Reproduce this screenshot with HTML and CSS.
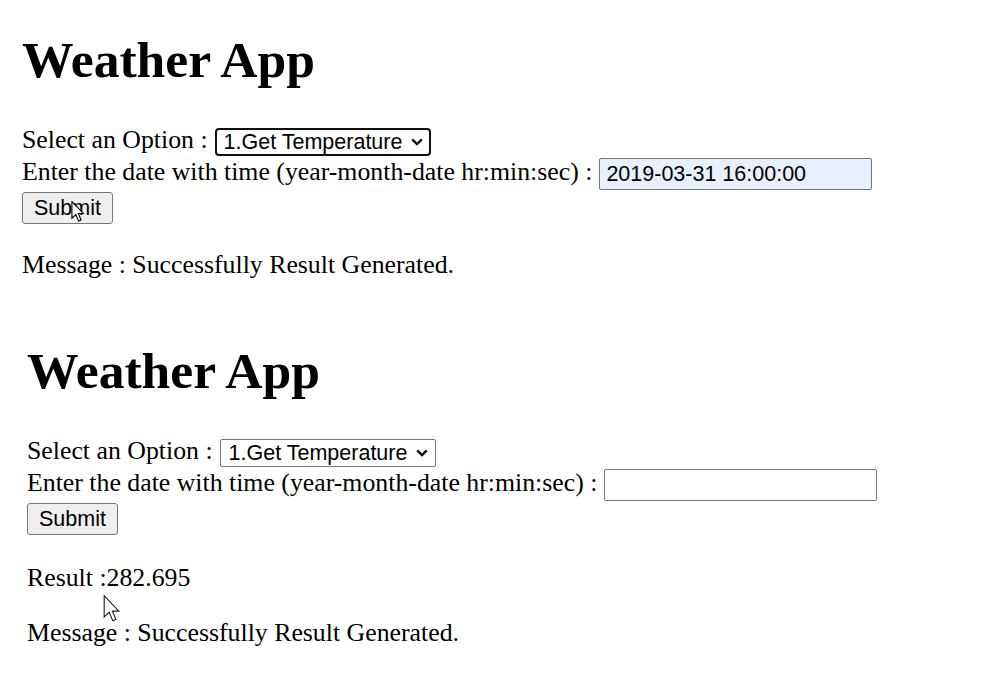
FILE: index.html
```html
<!DOCTYPE html>
<html lang="en">
<head>
<meta charset="utf-8">
<title>Weather App</title>
<link rel="stylesheet" href="styles.css">
</head>
<body>
<section class="shot shot-one">
  <h1 class="title">Weather App</h1>
  <form class="form">
    <div class="row">
      <span class="label">Select an Option :</span>
      <span class="select-wrap">
        <select class="select select-focus"><option>1.Get Temperature</option></select>
        <svg class="chev" width="12" height="8" viewBox="0 0 12 8"><path d="M1.2 1.3 L6 6 L10.8 1.3" fill="none" stroke="#111" stroke-width="2.4"/></svg>
      </span>
    </div>
    <div class="row">
      <span class="label">Enter the date with time (year-month-date hr:min:sec) :</span>
      <input class="text text-filled" type="text" value="2019-03-31 16:00:00">
    </div>
    <div class="row">
      <button class="btn" type="button">Submit</button>
    </div>
  </form>
  <p class="msg first">Message : Successfully Result Generated.</p>
  <svg class="cursor cursor-a" width="14" height="21" viewBox="0 0 12 19"><path d="M0.5 0.5 L0.5 15.5 L4 12.2 L6.6 18.2 L8.8 17.2 L6.3 11.3 L10.8 11.3 Z" fill="#fff" stroke="#000" stroke-width="1"/></svg>
</section>
<section class="shot shot-two">
  <h1 class="title">Weather App</h1>
  <form class="form">
    <div class="row">
      <span class="label">Select an Option :</span>
      <span class="select-wrap">
        <select class="select"><option>1.Get Temperature</option></select>
        <svg class="chev" width="12" height="8" viewBox="0 0 12 8"><path d="M1.2 1.3 L6 6 L10.8 1.3" fill="none" stroke="#111" stroke-width="2.4"/></svg>
      </span>
    </div>
    <div class="row">
      <span class="label">Enter the date with time (year-month-date hr:min:sec) :</span>
      <input class="text" type="text" value="">
    </div>
    <div class="row">
      <button class="btn" type="button">Submit</button>
    </div>
  </form>
  <p class="msg result">Result :282.695</p>
  <p class="msg after">Message : Successfully Result Generated.</p>
  <svg class="cursor cursor-b" width="18" height="27" viewBox="0 0 12 19"><path d="M0.5 0.5 L0.5 15.5 L4 12.2 L6.6 18.2 L8.8 17.2 L6.3 11.3 L10.8 11.3 Z" fill="#fff" stroke="#222" stroke-width="0.8"/></svg>
</section>
</body>
</html>
```
FILE: styles.css
```css
html, body {
  margin: 0;
  padding: 0;
  background: #fff;
}
body {
  font-family: "Liberation Serif", "Times New Roman", serif;
  font-size: 25.8px;
  color: #000;
  width: 981px;
  height: 687px;
  overflow: hidden;
}
.shot {
  position: relative;
  box-sizing: border-box;
  padding-top: 30px;
}
.shot-one {
  height: 311px;
  padding-left: 22px;
}
.shot-two {
  padding-left: 27px;
}
.title {
  font-size: 51.6px;
  line-height: 60px;
  font-weight: bold;
  margin: 0 0 38px 0;
}
.form {
  display: flex;
  flex-direction: column;
  gap: 2px;
}
.row {
  display: flex;
  align-items: center;
  gap: 7px;
}
.label {
  line-height: 24px;
  padding-bottom: 4px;
  white-space: nowrap;
}
.select-wrap {
  position: relative;
  display: inline-flex;
}
.select {
  appearance: none;
  -webkit-appearance: none;
  box-sizing: border-box;
  width: 216px;
  height: 28px;
  margin: 0;
  padding: 0 0 0 8px;
  font-family: "Liberation Sans", Arial, sans-serif;
  font-size: 21.5px;
  color: #000;
  background: #fff;
  border: 1px solid #767676;
  border-radius: 2px;
}
.select-focus {
  border: 2px solid #101010;
  border-radius: 4px;
  padding-left: 7px;
}
.chev {
  position: absolute;
  right: 8px;
  top: 10px;
  pointer-events: none;
}
.text {
  box-sizing: border-box;
  width: 273px;
  height: 32px;
  margin: 0;
  padding: 0 6px;
  font-family: "Liberation Sans", Arial, sans-serif;
  font-size: 21.5px;
  color: #000;
  background: #fff;
  border: 1px solid #767676;
  border-radius: 2px;
}
.text-filled {
  background: #e8f0fe;
}
.btn {
  box-sizing: border-box;
  width: 91px;
  height: 32px;
  margin: 0;
  padding: 0;
  font-family: "Liberation Sans", Arial, sans-serif;
  font-size: 21.5px;
  color: #000;
  background: #efefef;
  border: 1px solid #767676;
  border-radius: 3px;
}
.msg {
  line-height: 30px;
  margin: 0;
}
.first {
  margin-top: 26px;
}
.result {
  margin-top: 28px;
}
.after {
  margin-top: 25px;
}
.cursor {
  position: absolute;
}
.cursor-a {
  left: 71px;
  top: 201px;
}
.cursor-b {
  left: 103px;
  top: 284px;
}
```
